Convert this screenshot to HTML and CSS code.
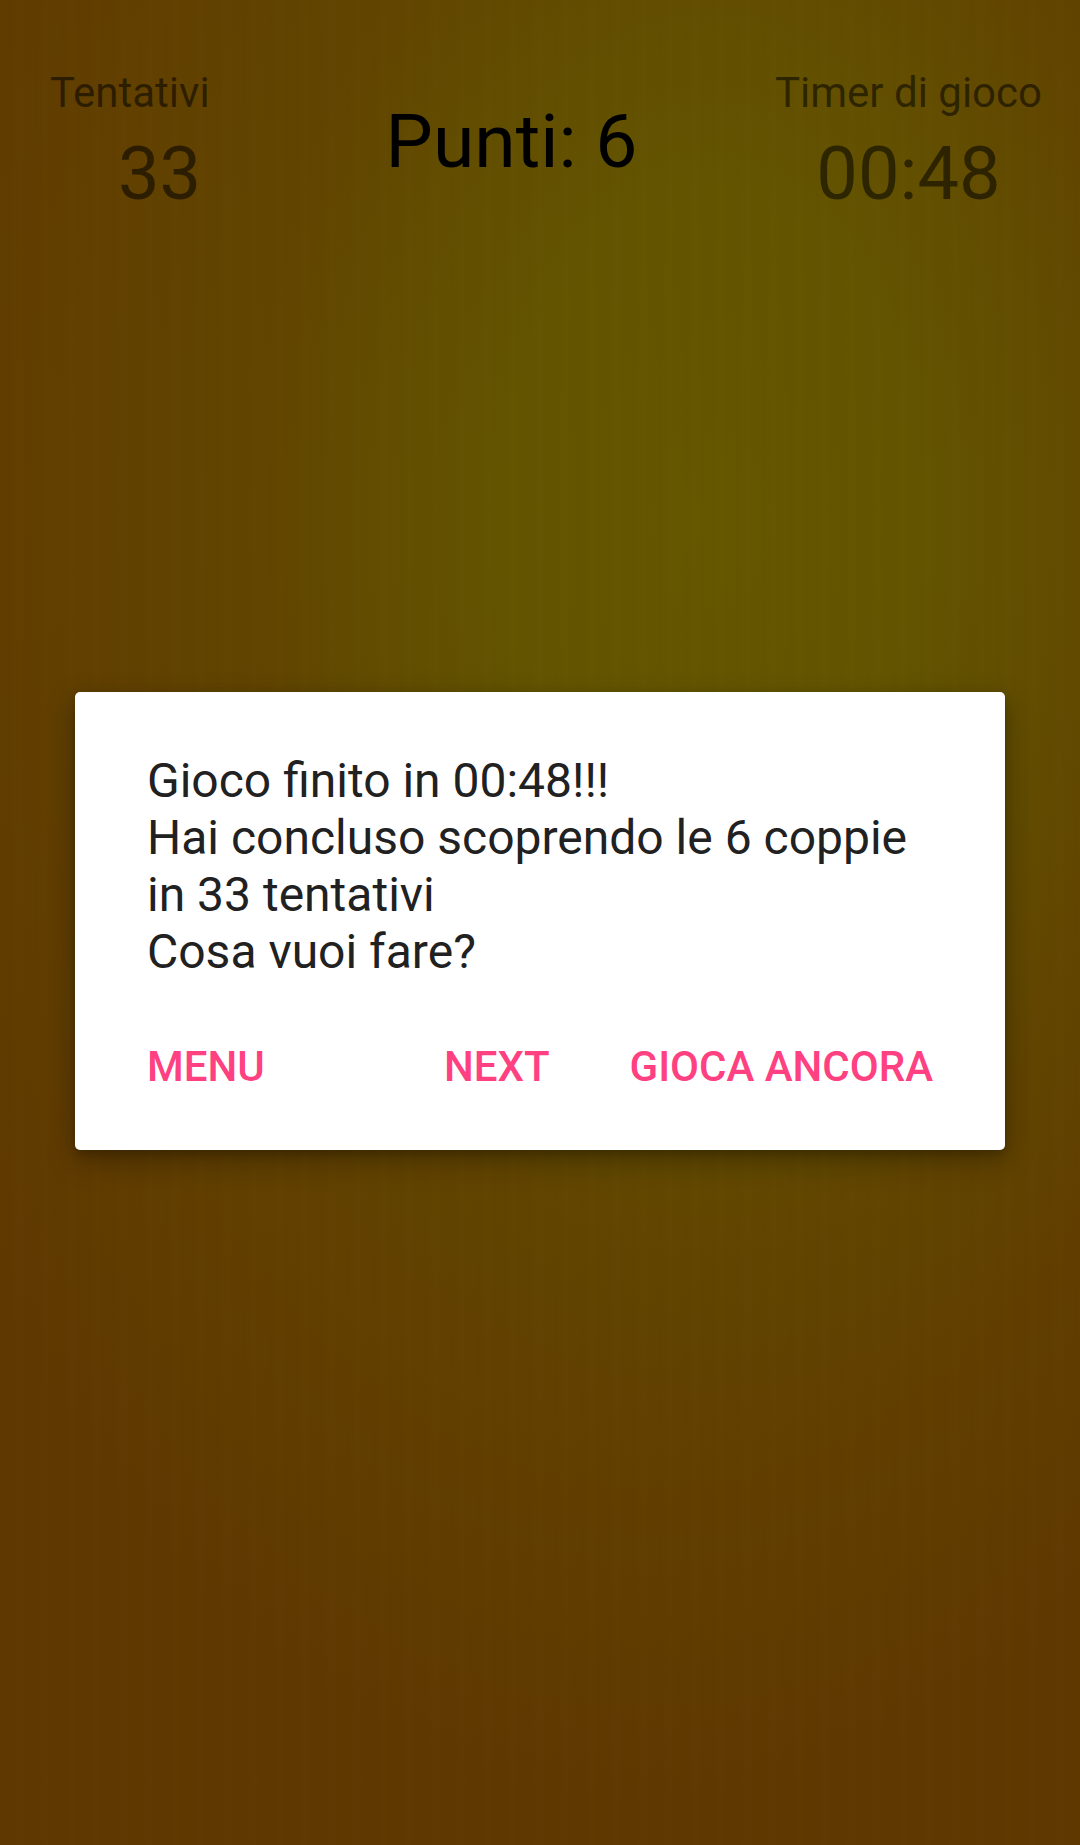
FILE: index.html
```html
<!DOCTYPE html>
<html lang="it">
<head>
<meta charset="utf-8">
<title>Memory - Gioco finito</title>
<link rel="stylesheet" href="styles.css">
</head>
<body>
<main class="screen">
  <header class="stats">
    <div class="stat stat-left">
      <div class="stat-label">Tentativi</div>
      <div class="stat-value">33</div>
    </div>
    <div class="score">Punti: 6</div>
    <div class="stat stat-right">
      <div class="stat-label">Timer di gioco</div>
      <div class="stat-value">00:48</div>
    </div>
  </header>

  <div class="overlay">
    <section class="dialog" role="dialog">
      <p class="dialog-message">Gioco finito in 00:48!!!<br>Hai concluso scoprendo le 6 coppie<br>in 33 tentativi<br>Cosa vuoi fare?</p>
      <div class="dialog-actions">
        <button class="btn">MENU</button>
        <span class="spacer"></span>
        <button class="btn">NEXT</button>
        <button class="btn btn-last">GIOCA ANCORA</button>
      </div>
    </section>
  </div>
</main>
</body>
</html>
```

FILE: styles.css
```css
html, body {
  margin: 0;
  padding: 0;
  width: 1080px;
  height: 1845px;
  overflow: hidden;
}

body {
  font-family: Roboto, "Liberation Sans", sans-serif;
  background: #603a00;
}

.screen {
  position: relative;
  width: 1080px;
  height: 1845px;
  background:
    repeating-linear-gradient(90deg,
      rgba(0,0,0,0.00) 0px, rgba(0,0,0,0.00) 9px,
      rgba(0,0,0,0.012) 10px, rgba(0,0,0,0.00) 13px,
      rgba(255,255,255,0.006) 19px, rgba(0,0,0,0.00) 26px),
    radial-gradient(ellipse 560px 900px at 710px 520px,
      #645700 0%, #635500 35%, #624d00 60%, #614400 82%, rgba(96,62,0,0) 100%),
    radial-gradient(ellipse 820px 1300px at 650px 500px,
      #624e00 0%, #614000 70%, #5f3800 100%),
    #5f3700;
}

.stats {
  display: flex;
  align-items: flex-start;
  padding: 68px 38px 0 50px;
}

.stat-label {
  font-size: 42px;
  line-height: 49px;
  color: rgba(0, 0, 0, 0.54);
}

.stat-value {
  font-size: 74px;
  line-height: 84px;
  margin-top: 15px;
  color: rgba(0, 0, 0, 0.54);
}

.stat-left .stat-value {
  padding-left: 68px;
}

.stat-right {
  margin-left: auto;
  text-align: center;
}

.score {
  margin-left: 176px;
  margin-top: 31px;
  font-size: 75px;
  line-height: 84px;
  color: #000;
}

.overlay {
  position: absolute;
  inset: 0;
  display: flex;
  align-items: center;
  justify-content: center;
  padding-bottom: 3px;
}

.dialog {
  width: 930px;
  height: 458px;
  box-sizing: border-box;
  background: #fff;
  border-radius: 5px;
  box-shadow: 0 10px 30px rgba(0, 0, 0, 0.30), 0 4px 10px rgba(0, 0, 0, 0.18);
  padding: 60px 72px 0 72px;
  display: flex;
  flex-direction: column;
}

.dialog-message {
  margin: 0;
  font-size: 48px;
  line-height: 57px;
  color: #212121;
}

.dialog-actions {
  display: flex;
  align-items: center;
  margin-top: 62px;
}

.spacer {
  flex: 1;
}

.btn {
  font-family: Roboto, "Liberation Sans", sans-serif;
  font-weight: 500;
  font-size: 42px;
  line-height: 49px;
  color: #ff4081;
  background: none;
  border: 0;
  padding: 0;
  margin: 0;
}

.btn-last {
  margin-left: 80px;
}
```
